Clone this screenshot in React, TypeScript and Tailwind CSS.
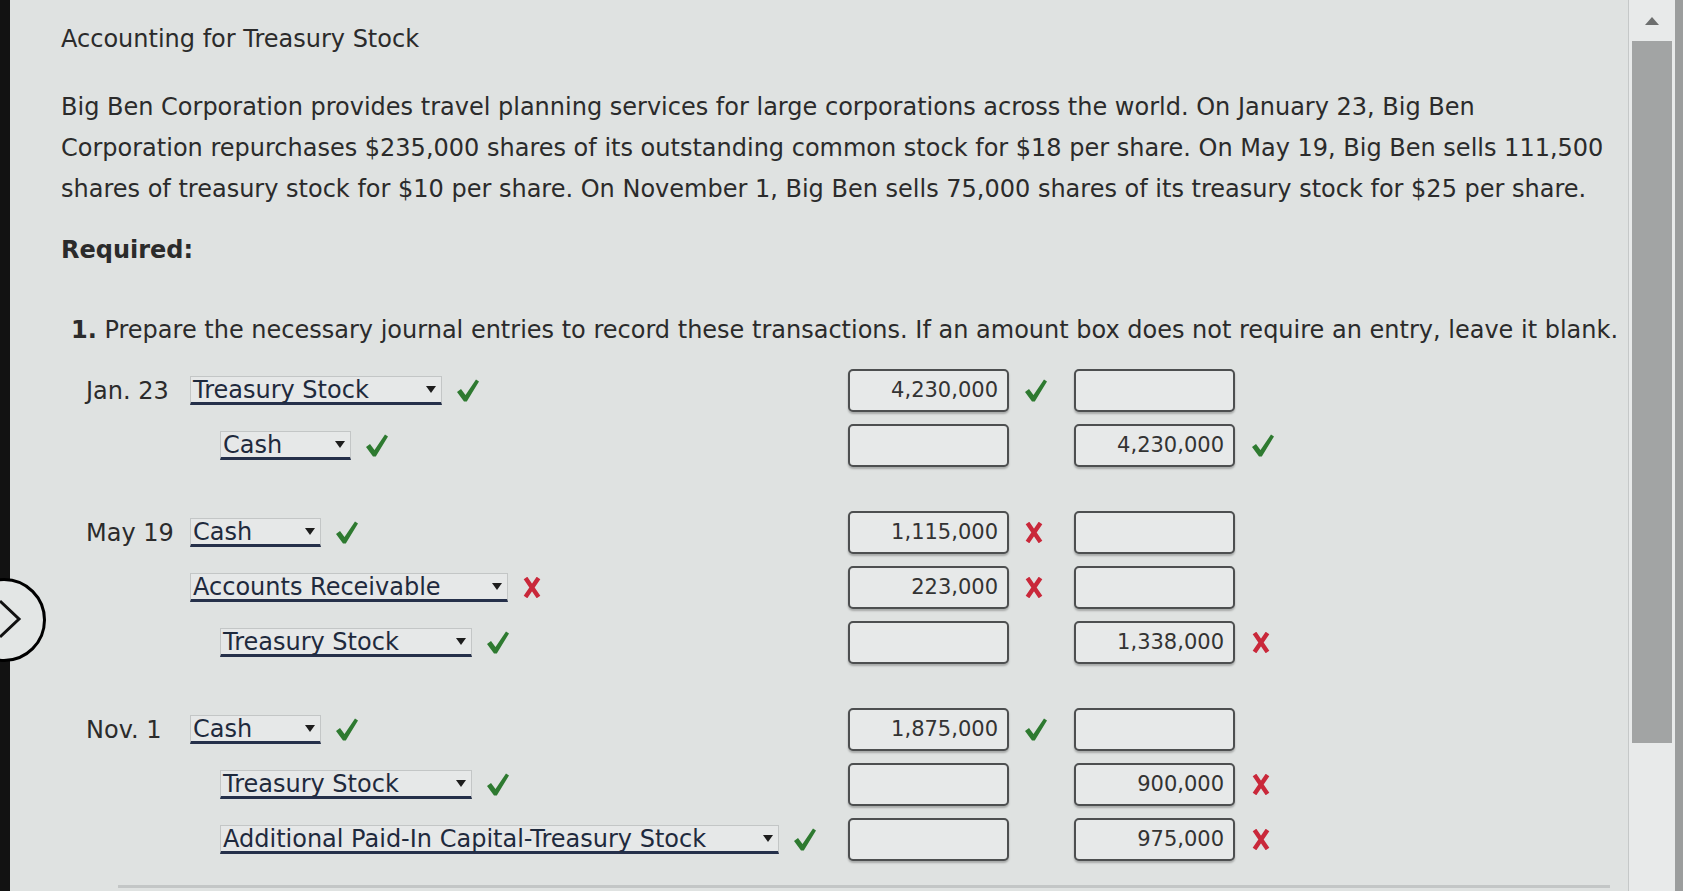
import React from "react";

type Mark = "ok" | "bad" | null;

type Line = {
  account: string;
  width: string;
  credit: boolean;
  accountMark: Mark;
  debit: string;
  debitMark: Mark;
  creditAmt: string;
  creditMark: Mark;
};

type Entry = { date: string; lines: Line[] };

const entries: Entry[] = [
  {
    date: "Jan. 23",
    lines: [
      { account: "Treasury Stock", width: "w-[252px]", credit: false, accountMark: "ok", debit: "4,230,000", debitMark: "ok", creditAmt: "", creditMark: null },
      { account: "Cash", width: "w-[131px]", credit: true, accountMark: "ok", debit: "", debitMark: null, creditAmt: "4,230,000", creditMark: "ok" },
    ],
  },
  {
    date: "May 19",
    lines: [
      { account: "Cash", width: "w-[131px]", credit: false, accountMark: "ok", debit: "1,115,000", debitMark: "bad", creditAmt: "", creditMark: null },
      { account: "Accounts Receivable", width: "w-[318px]", credit: false, accountMark: "bad", debit: "223,000", debitMark: "bad", creditAmt: "", creditMark: null },
      { account: "Treasury Stock", width: "w-[252px]", credit: true, accountMark: "ok", debit: "", debitMark: null, creditAmt: "1,338,000", creditMark: "bad" },
    ],
  },
  {
    date: "Nov. 1",
    lines: [
      { account: "Cash", width: "w-[131px]", credit: false, accountMark: "ok", debit: "1,875,000", debitMark: "ok", creditAmt: "", creditMark: null },
      { account: "Treasury Stock", width: "w-[252px]", credit: true, accountMark: "ok", debit: "", debitMark: null, creditAmt: "900,000", creditMark: "bad" },
      { account: "Additional Paid-In Capital-Treasury Stock", width: "w-[559px]", credit: true, accountMark: "ok", debit: "", debitMark: null, creditAmt: "975,000", creditMark: "bad" },
    ],
  },
];

function Check() {
  return (
    <svg width="22" height="23" viewBox="0 0 22 23" className="shrink-0">
      <path d="M0 13 L4 10 L8.5 16 L19 0.5 L22 2.5 L9.8 22.5 L7 22.5 Z" fill="#2e7a30" />
    </svg>
  );
}

function Cross() {
  return (
    <svg width="18" height="21" viewBox="0 0 18 21" className="shrink-0">
      <path d="M2.5 1 L15.5 20 M15.5 1 L2.5 20" stroke="#c9283a" strokeWidth="4.4" fill="none" />
    </svg>
  );
}

function MarkIcon({ mark }: { mark: Mark }) {
  if (mark === "ok") return <Check />;
  if (mark === "bad") return <Cross />;
  return null;
}

function AccountSelect({ label, width }: { label: string; width: string }) {
  return (
    <div
      className={`flex h-[29px] items-center justify-between border border-[#c3c6c6] border-b-[3px] border-b-[#25304a] bg-[#e6e8e8] pl-[2px] pr-[5px] ${width}`}
    >
      <span className="whitespace-nowrap text-[24px] leading-none text-[#1f2a3d]">{label}</span>
      <svg width="10" height="7" viewBox="0 0 10 7" className="shrink-0">
        <path d="M0 0 L10 0 L5 7 Z" fill="#1d1d1d" />
      </svg>
    </div>
  );
}

function AmountBox({ value }: { value: string }) {
  return (
    <div className="flex h-[43px] w-[161px] shrink-0 items-center justify-end rounded-[5px] border-2 border-[#4d4f50] bg-[#e7e9e9] pr-[9px] text-[21px] text-[#333] shadow-[0_2px_2px_rgba(0,0,0,0.25)]">
      {value}
    </div>
  );
}

function JournalLine({ date, line }: { date: string; line: Line }) {
  return (
    <div className="flex h-[47px] items-center">
      <div className="flex w-[762px] items-center">
        <span className="w-[104px] shrink-0 text-[24px] text-[#2b2b2b]">{date}</span>
        <div className={`flex items-center gap-[15px] ${line.credit ? "ml-[30px]" : ""}`}>
          <AccountSelect label={line.account} width={line.width} />
          <MarkIcon mark={line.accountMark} />
        </div>
      </div>
      <AmountBox value={line.debit} />
      <div className="flex w-[65px] items-center pl-[16px]">
        <MarkIcon mark={line.debitMark} />
      </div>
      <AmountBox value={line.creditAmt} />
      <div className="flex items-center pl-[17px]">
        <MarkIcon mark={line.creditMark} />
      </div>
    </div>
  );
}

export default function App() {
  return (
    <div className="relative flex h-[891px] w-[1683px] overflow-hidden bg-[#dfe2e1] font-['DejaVu_Sans','Liberation_Sans',sans-serif] text-[#2b2b2b]">
      {/* monitor bezel */}
      <div className="w-[10px] shrink-0 bg-[#121212]" />

      <main className="flex flex-1 flex-col pl-[51px] pt-[24px]">
        <h1 className="text-[24px] leading-[30px] font-normal">Accounting for Treasury Stock</h1>

        <p className="mt-[33px] whitespace-nowrap text-[24px] leading-[41px]">
          Big Ben Corporation provides travel planning services for large corporations across the world. On January 23, Big Ben
          <br />
          Corporation repurchases $235,000 shares of its outstanding common stock for $18 per share. On May 19, Big Ben sells 111,500
          <br />
          shares of treasury stock for $10 per share. On November 1, Big Ben sells 75,000 shares of its treasury stock for $25 per share.
        </p>

        <p className="mt-[25px] text-[24px] leading-[30px] font-bold">Required:</p>

        <p className="mt-[50px] ml-[10px] whitespace-nowrap text-[24px] leading-[30px]">
          <span className="font-bold">1.</span> Prepare the necessary journal entries to record these transactions. If an amount box does not require an entry, leave it blank.
        </p>

        <div className="mt-[22px] ml-[25px] flex flex-col gap-[40px]">
          {entries.map((entry) => (
            <div key={entry.date} className="flex flex-col gap-[8px]">
              {entry.lines.map((line, i) => (
                <JournalLine key={line.account + i} date={i === 0 ? entry.date : ""} line={line} />
              ))}
            </div>
          ))}
        </div>

        <div className="mt-auto mb-[3px] ml-[57px] mr-[18px] h-[3px] bg-[#c3c6c6]" />
      </main>

      {/* scrollbar */}
      <div className="flex w-[55px] shrink-0">
        <div className="flex w-[47px] flex-col items-center border-l border-[#c5c8c8] bg-[#e8eaea]">
          <svg width="14" height="8" viewBox="0 0 14 8" className="mt-[17px]">
            <path d="M0 8 L7 0 L14 8 Z" fill="#6d6f6f" />
          </svg>
          <div className="mt-[16px] h-[702px] w-[40px] bg-[#a2a4a4]" />
        </div>
        <div className="w-[8px] bg-[#9b9d9d]" />
      </div>

      {/* side toggle button */}
      <div className="absolute left-[-38px] top-[578px] h-[84px] w-[84px] rounded-full border-[3px] border-black bg-[#e3e6e5]" />
      <svg className="absolute left-0 top-[598px]" width="24" height="42" viewBox="0 0 24 42">
        <path d="M0 3 L19 21 L0 39" stroke="#111" strokeWidth="3" fill="none" />
      </svg>
    </div>
  );
}
